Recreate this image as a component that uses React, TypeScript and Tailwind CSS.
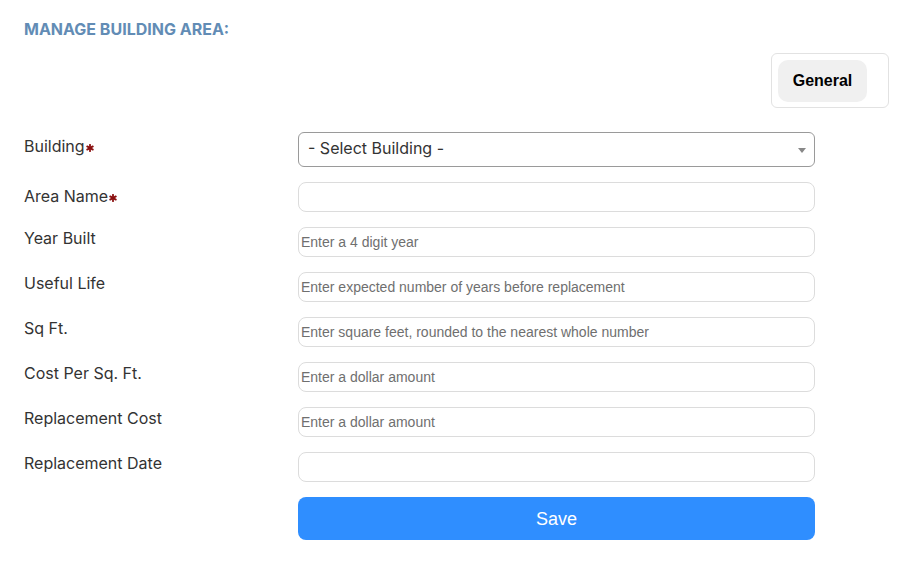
import React from 'react';

interface Field {
  label: string;
  placeholder?: string;
  required?: boolean;
}

const fields: Field[] = [
  { label: 'Area Name', required: true },
  { label: 'Year Built', placeholder: 'Enter a 4 digit year' },
  { label: 'Useful Life', placeholder: 'Enter expected number of years before replacement' },
  { label: 'Sq Ft.', placeholder: 'Enter square feet, rounded to the nearest whole number' },
  { label: 'Cost Per Sq. Ft.', placeholder: 'Enter a dollar amount' },
  { label: 'Replacement Cost', placeholder: 'Enter a dollar amount' },
  { label: 'Replacement Date' },
];

function Star() {
  return (
    <svg width="8" height="8" viewBox="0 0 8 8" className="ml-[1px] mt-[3px] inline-block">
      <g stroke="#8b1010" strokeWidth="1.8" strokeLinecap="round">
        <line x1="4" y1="0.8" x2="4" y2="7.2" />
        <line x1="1.2" y1="2.4" x2="6.8" y2="5.6" />
        <line x1="1.2" y1="5.6" x2="6.8" y2="2.4" />
      </g>
    </svg>
  );
}

export default function App() {
  return (
    <div className="min-h-screen bg-white font-['Inter',sans-serif] text-[#333]">
      <div className="px-[24px] pt-[19px]">
        <h1 className="text-[16px] leading-[20px] font-bold text-[#628cb5] uppercase">
          Manage Building Area:
        </h1>
      </div>

      {/* Tabs */}
      <div className="flex justify-end pr-[12px] mt-[14px]">
        <div className="w-[118px] h-[55px] rounded-[6px] border border-[#e2e2e2] p-[6px]">
          <button className="w-[89px] h-[42px] rounded-[10px] bg-[#f0f0f0] font-['Liberation_Sans',sans-serif] font-bold text-[16px] text-black">
            General
          </button>
        </div>
      </div>

      {/* Form */}
      <div className="mt-[24px] pl-[24px] flex flex-col gap-[15px]">
        <div className="flex items-start">
          <div className="w-[274px] pt-[4px] text-[16px] leading-[20px] flex items-center">
            Building
            <Star />
          </div>
          <div className="relative w-[517px] h-[35px] rounded-[6px] border border-[#9a9a9a] flex items-center pl-[9px] pb-[3px]">
            <span className="text-[16px] text-[#333]">- Select Building -</span>
            <svg width="8" height="5" viewBox="0 0 8 5" className="absolute right-[8px] top-[15px]">
              <path d="M0 0 L8 0 L4 5 Z" fill="#888" />
            </svg>
          </div>
        </div>

        {fields.map((f) => (
          <div key={f.label} className="flex items-start">
            <div
              className={`w-[274px] text-[16px] leading-[20px] flex items-center ${
                f.required ? 'pt-[4px]' : 'pt-[1px]'
              }`}
            >
              {f.label}
              {f.required && <Star />}
            </div>
            <input
              type="text"
              placeholder={f.placeholder}
              className="w-[517px] h-[30px] rounded-[8px] border border-[#dcdcdc] px-[2px] font-['Liberation_Sans',sans-serif] text-[14px] text-black placeholder:text-[#6f6f6f] outline-none"
            />
          </div>
        ))}

        <div className="flex">
          <div className="w-[274px]" />
          <button className="w-[517px] h-[43px] rounded-[8px] bg-[#2f8eff] text-white font-['Liberation_Sans',sans-serif] text-[18px] pt-[2px]">
            Save
          </button>
        </div>
      </div>
    </div>
  );
}
